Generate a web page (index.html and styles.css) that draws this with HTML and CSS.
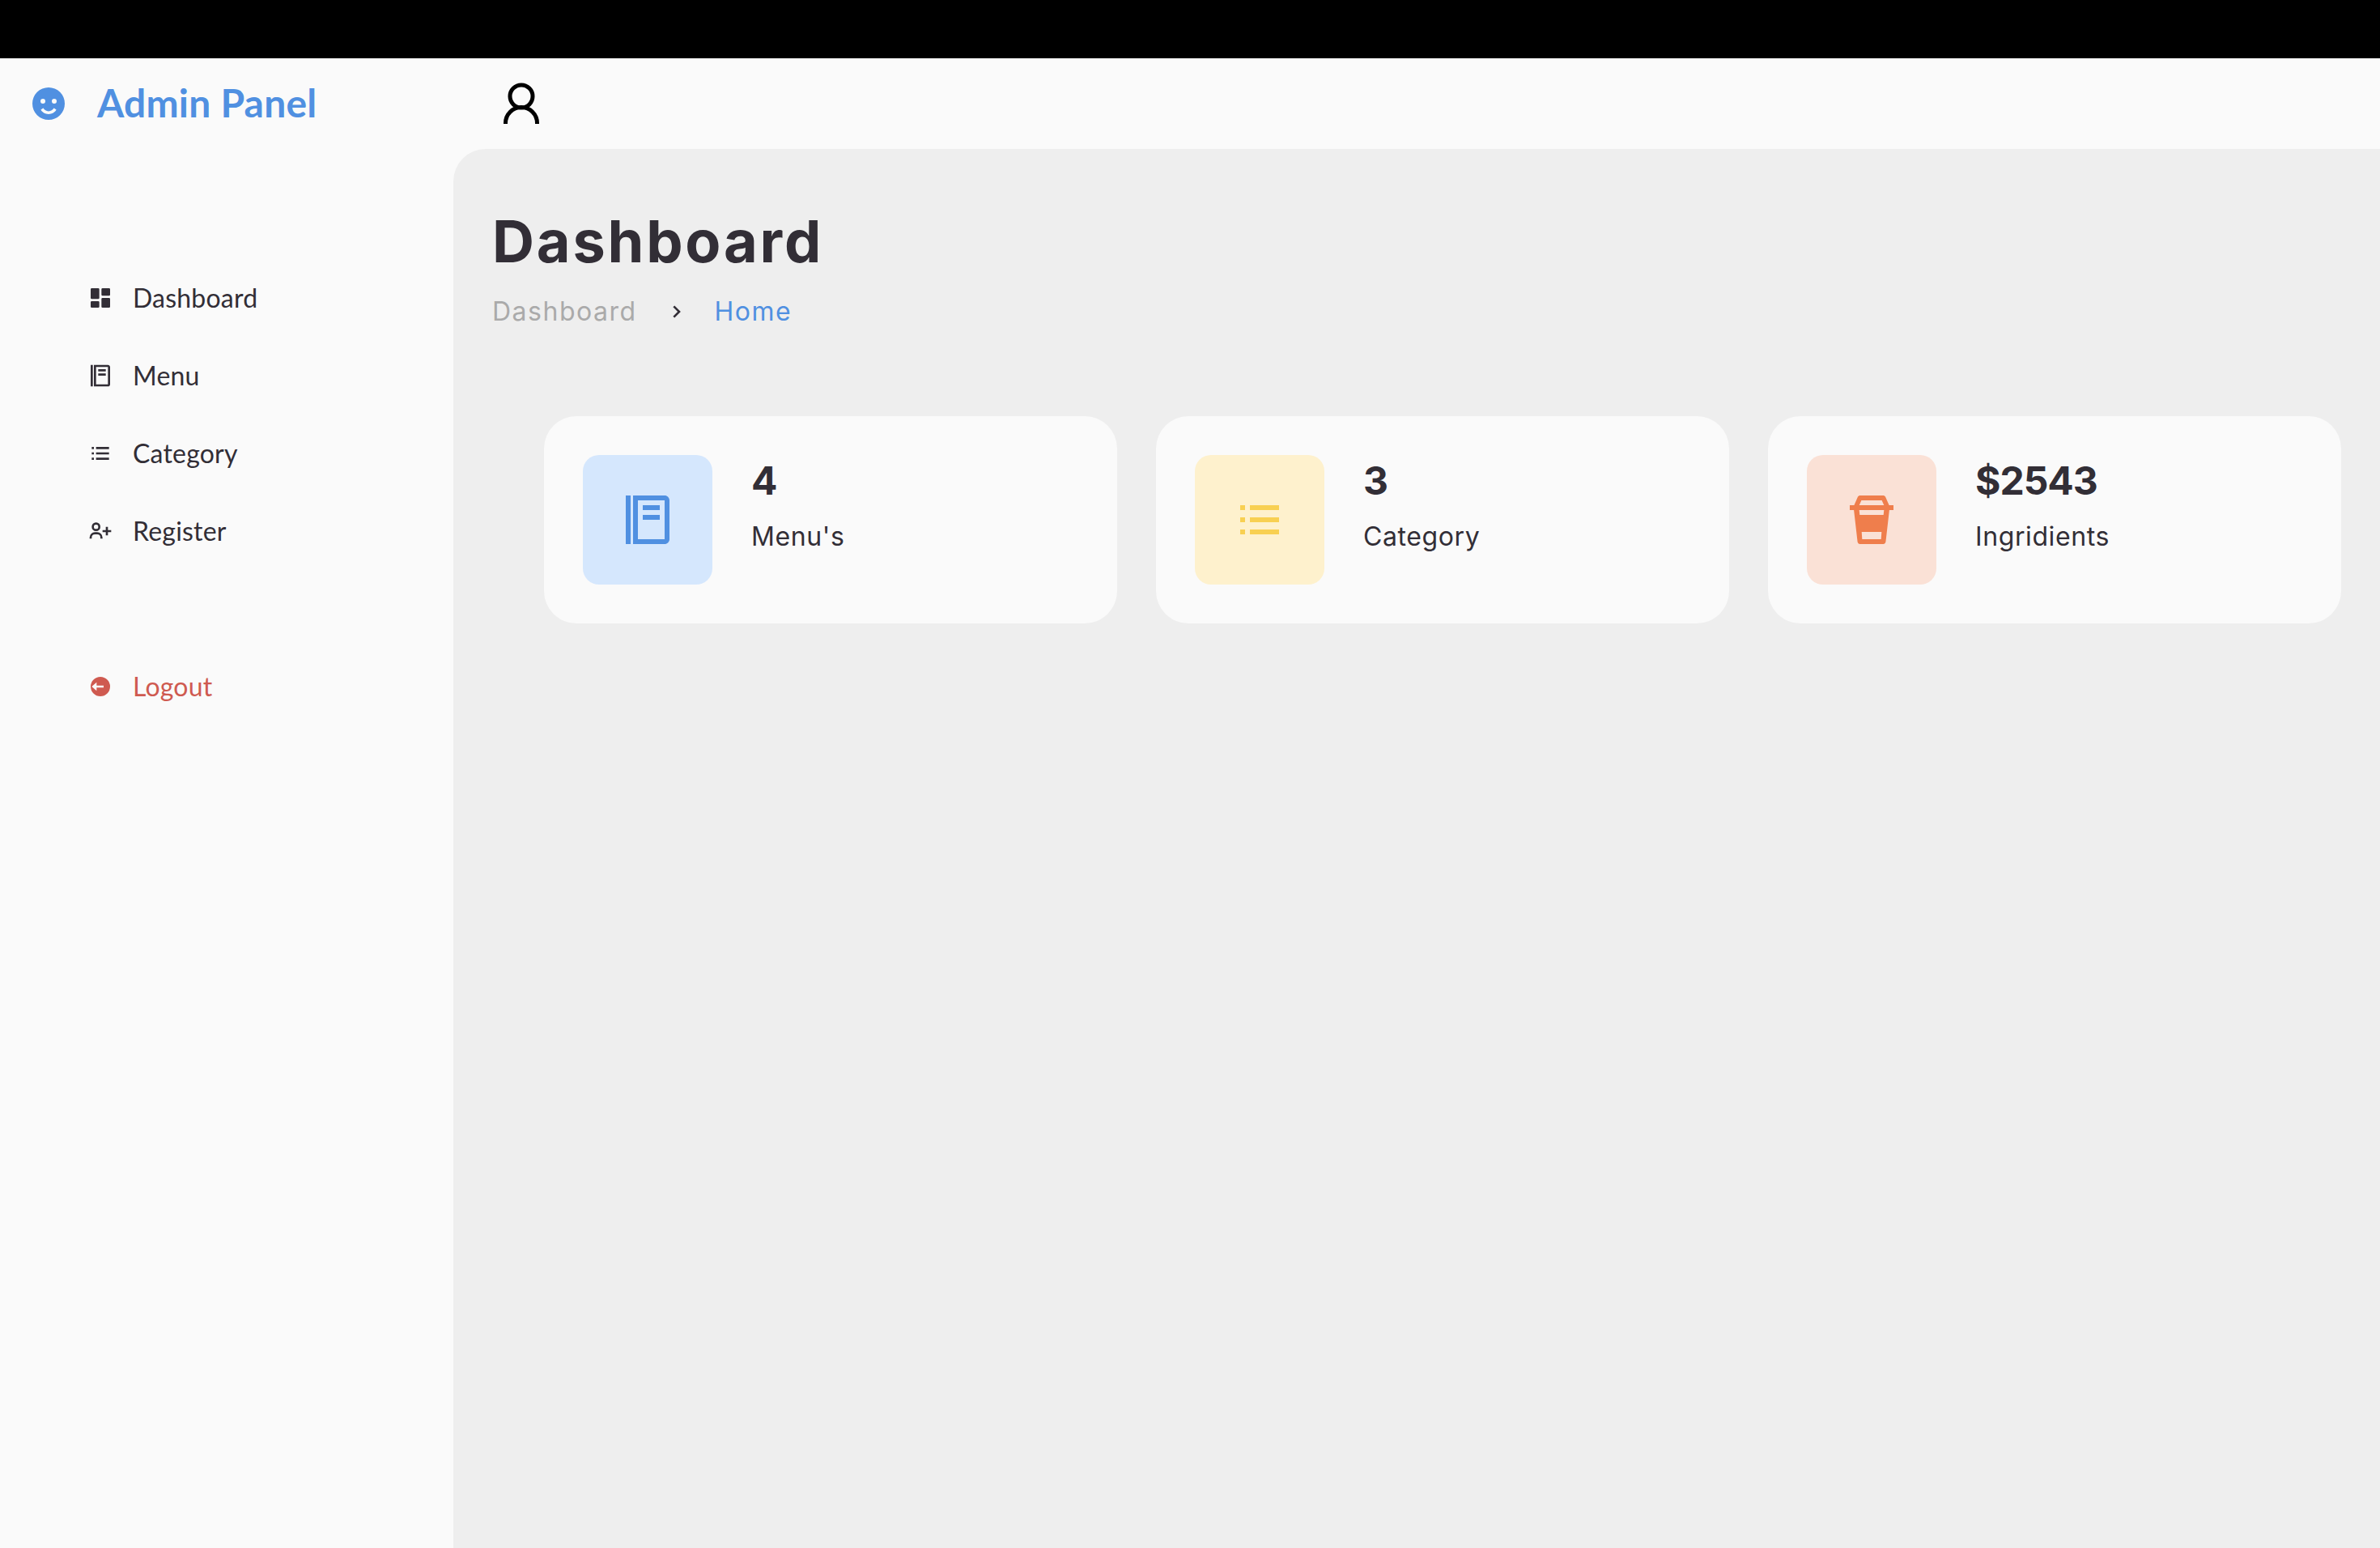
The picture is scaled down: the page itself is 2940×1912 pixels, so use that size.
FILE: index.html
```html
<!DOCTYPE html>
<html lang="en">

<head>
  <meta charset="UTF-8">
  <meta name="viewport" content="width=device-width, initial-scale=1.0">
  <title>Admin Panel</title>
  <link rel="stylesheet" href="styles.css">
</head>

<body>
  <svg class="icon-defs" aria-hidden="true">
    <symbol id="i-dashboard" viewBox="0 0 24 24">
      <path d="M4 13h6a1 1 0 0 0 1-1V4a1 1 0 0 0-1-1H4a1 1 0 0 0-1 1v8a1 1 0 0 0 1 1zm-1 7a1 1 0 0 0 1 1h6a1 1 0 0 0 1-1v-4a1 1 0 0 0-1-1H4a1 1 0 0 0-1 1v4zm10 0a1 1 0 0 0 1 1h6a1 1 0 0 0 1-1v-7a1 1 0 0 0-1-1h-6a1 1 0 0 0-1 1v7zm1-10h6a1 1 0 0 0 1-1V4a1 1 0 0 0-1-1h-6a1 1 0 0 0-1 1v5a1 1 0 0 0 1 1z" />
    </symbol>
    <symbol id="i-book" viewBox="0 0 24 24">
      <path fill-rule="evenodd" d="M3 2h2v20H3zM19 2H6v20h13c1.100 0 2-.9 2-2V4c0-1.100-.9-2-2-2zm0 18H8V4h11v16zM10 6h7v2h-7zm0 4h7v2h-7z" />
    </symbol>
    <symbol id="i-list" viewBox="0 0 24 24">
      <path d="M4 6h2v2H4zm0 5h2v2H4zm0 5h2v2H4zM8 6h12v2H8zm0 5h12v2H8zm0 5h12v2H8z" />
    </symbol>
    <symbol id="i-user-plus" viewBox="0 0 24 24">
      <path d="M19 8h-2v3h-3v2h3v3h2v-3h3v-2h-3zM4 8a3.910 3.910 0 0 0 4 4 3.910 3.910 0 0 0 4-4 3.910 3.910 0 0 0-4-4 3.910 3.910 0 0 0-4 4zm6 0a1.910 1.910 0 0 1-2 2 1.910 1.910 0 0 1-2-2 1.910 1.910 0 0 1 2-2 1.910 1.910 0 0 1 2 2zM4 18a3 3 0 0 1 3-3h2a3 3 0 0 1 3 3v1h2v-1a5 5 0 0 0-5-5H7a5 5 0 0 0-5 5v1h2z" />
    </symbol>
    <symbol id="i-logout" viewBox="0 0 24 24">
      <path fill-rule="evenodd" d="M12 3a9 9 0 1 0 0 18 9 9 0 0 0 0-18zM4 12l4.500-4v3H15v2H8.500v3z" />
    </symbol>
    <symbol id="i-smile" viewBox="0 0 24 24">
      <path fill-rule="evenodd" d="M12 2a10 10 0 1 0 0 20 10 10 0 0 0 0-20zM8.500 9a1.500 1.500 0 1 1 0 3 1.500 1.500 0 0 1 0-3zm7 0a1.500 1.500 0 1 1 0 3 1.500 1.500 0 0 1 0-3zM12 18.500c-2.200 0-3.900-1.100-4.800-2.700l1.500-1c.7 1.200 1.900 1.900 3.300 1.900s2.600-.7 3.300-1.900l1.500 1c-.9 1.600-2.600 2.700-4.800 2.700z" />
    </symbol>
    <symbol id="i-chevron" viewBox="0 0 24 24">
      <path d="M10.707 17.707 16.414 12l-5.707-5.707-1.414 1.414L13.586 12l-4.293 4.293z" />
    </symbol>
    <symbol id="i-cup" viewBox="0 0 24 24">
      <path fill-rule="evenodd" d="M7.300 2h9.400c.4 0 .8.2 1 .6L19.200 6H21v2h-1.700l-1.500 13.100c-.1.5-.5.9-1 .9H7.200c-.5 0-.9-.4-1-.9L4.700 8H3V6h1.800l1.500-3.400c.2-.4.600-.6 1-.6zM7.800 4l-.9 2h10.200l-.9-2zM6.900 8l.2 2h9.800l.2-2zM7.900 17l.2 3h7.800l.2-3z" />
    </symbol>
  </svg>

  <div class="top-strip"></div>

  <div class="shell">
    <aside class="sidebar">
      <a class="brand" href="#">
        <svg class="brand-icon"><use href="#i-smile" /></svg>
        <span class="brand-name">Admin Panel</span>
      </a>

      <ul class="side-menu">
        <li><a href="#"><svg class="side-icon"><use href="#i-dashboard" /></svg>Dashboard</a></li>
        <li><a href="#"><svg class="side-icon"><use href="#i-book" /></svg>Menu</a></li>
        <li><a href="#"><svg class="side-icon"><use href="#i-list" /></svg>Category</a></li>
        <li><a href="#"><svg class="side-icon"><use href="#i-user-plus" /></svg>Register</a></li>
      </ul>

      <ul class="side-menu side-menu-bottom">
        <li><a class="logout" href="#"><svg class="side-icon"><use href="#i-logout" /></svg>Logout</a></li>
      </ul>
    </aside>

    <div class="content">
      <nav class="navbar">
        <svg class="user-icon" viewBox="0 0 50 54" fill="none" stroke="currentColor" stroke-width="5">
          <circle cx="25" cy="18" r="14" />
          <path d="M5.500 52v-1a19.500 19.500 0 0 1 39 0v1" />
        </svg>
      </nav>

      <main class="main">
        <h1 class="page-title">Dashboard</h1>
        <ul class="breadcrumb">
          <li class="crumb-muted">Dashboard</li>
          <li><svg class="crumb-icon"><use href="#i-chevron" /></svg></li>
          <li class="crumb-active">Home</li>
        </ul>

        <ul class="box-info">
          <li class="box">
            <span class="box-icon box-blue"><svg><use href="#i-book" /></svg></span>
            <div class="box-text">
              <h3>4</h3>
              <p>Menu's</p>
            </div>
          </li>
          <li class="box">
            <span class="box-icon box-yellow"><svg><use href="#i-list" /></svg></span>
            <div class="box-text">
              <h3>3</h3>
              <p>Category</p>
            </div>
          </li>
          <li class="box">
            <span class="box-icon box-orange"><svg><use href="#i-cup" /></svg></span>
            <div class="box-text">
              <h3>$2543</h3>
              <p>Ingridients</p>
            </div>
          </li>
        </ul>
      </main>
    </div>
  </div>
</body>

</html>
```

FILE: styles.css
```css
* {
  margin: 0;
  padding: 0;
  box-sizing: border-box;
}

ul {
  list-style: none;
}

a {
  text-decoration: none;
  color: inherit;
}

html,
body {
  height: 100%;
  overflow: hidden;
}

body {
  display: flex;
  flex-direction: column;
  background-color: #fafafa;
  color: #322e36;
  font-family: "Inter", "Liberation Sans", sans-serif;
}

svg {
  fill: currentColor;
}

.icon-defs {
  display: none;
}

.top-strip {
  height: 72px;
  background-color: #000;
}

.shell {
  flex: 1;
  display: flex;
  min-height: 0;
}

/* sidebar */
.sidebar {
  width: 560px;
  font-family: "Lato", sans-serif;
}

.brand {
  display: flex;
  align-items: center;
  gap: 36px;
  height: 112px;
  padding-left: 36px;
  color: #5090e1;
  font-size: 48px;
  font-weight: 700;
}

.brand-icon {
  width: 48px;
  height: 48px;
}

.brand-name {
  margin-bottom: 3px;
  letter-spacing: 0.2px;
}

.side-menu {
  margin-top: 136px;
}

.side-menu-bottom {
  margin-top: 96px;
}

.side-menu a {
  display: flex;
  align-items: center;
  gap: 24px;
  height: 96px;
  padding: 0 0 2px 108px;
  font-size: 32px;
  letter-spacing: 0.2px;
}

.side-icon {
  width: 32px;
  height: 32px;
  margin-top: 2px;
}

.logout {
  color: #cf5a50;
}

/* top bar */
.content {
  flex: 1;
  display: flex;
  flex-direction: column;
  min-width: 0;
}

.navbar {
  display: flex;
  align-items: center;
  height: 112px;
  padding-left: 59px;
  color: #000;
}

.user-icon {
  width: 50px;
  height: 54px;
  fill: none;
}

/* main */
.main {
  flex: 1;
  padding: 74px 48px 0;
  background-color: #eee;
  border-top-left-radius: 40px;
}

.page-title {
  font-size: 72px;
  font-weight: 700;
  line-height: 80px;
  letter-spacing: 2.8px;
}

.breadcrumb {
  display: flex;
  align-items: center;
  gap: 32px;
  margin-top: 27px;
  font-size: 32px;
  letter-spacing: 1.5px;
}

.crumb-muted {
  color: #aaa;
}

.crumb-active {
  color: #5090e1;
}

.crumb-icon {
  display: block;
  width: 32px;
  height: 32px;
}

.box-info {
  display: grid;
  grid-template-columns: repeat(3, 1fr);
  gap: 48px;
  margin: 110px 0 0 64px;
}

.box {
  display: flex;
  align-items: center;
  gap: 48px;
  height: 256px;
  padding: 48px;
  background-color: #fafafa;
  border-radius: 40px;
}

.box-icon {
  display: flex;
  align-items: center;
  justify-content: center;
  width: 160px;
  height: 160px;
  border-radius: 20px;
}

.box-icon svg {
  width: 72px;
  height: 72px;
}

.box-blue {
  background-color: #d5e7fd;
  color: #5090e1;
}

.box-yellow {
  background-color: #fef1cd;
  color: #f8d052;
}

.box-orange {
  background-color: #fae1d6;
  color: #ef7e4c;
}

.box-text {
  align-self: flex-start;
}

.box-text h3 {
  font-size: 48px;
  font-weight: 700;
  line-height: 64px;
  letter-spacing: -1px;
}

.box-text p {
  margin-top: 13px;
  font-size: 32px;
  line-height: 48px;
  letter-spacing: 0.6px;
}
```
